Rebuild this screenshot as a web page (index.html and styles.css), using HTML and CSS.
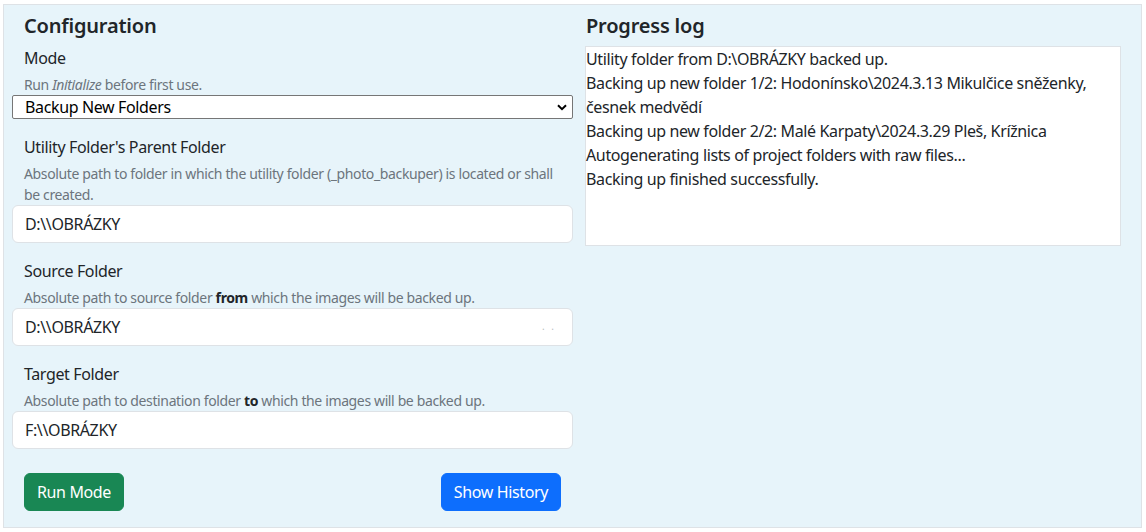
FILE: index.html
```html
<!DOCTYPE html>
<html lang="en">
<head>
<meta charset="utf-8">
<title>Photo Backuper</title>
<link rel="stylesheet" href="styles.css">
</head>
<body>
<div class="app">
  <section class="config">
    <h2 class="title">Configuration</h2>

    <div class="group">
      <label class="label">Mode</label>
      <div class="help">Run <em>Initialize</em> before first use.</div>
      <select class="select">
        <option>Backup New Folders</option>
      </select>
    </div>

    <div class="group">
      <label class="label">Utility Folder's Parent Folder</label>
      <div class="help">Absolute path to folder in which the utility folder (_photo_backuper) is located or shall be created.</div>
      <input class="input" type="text" value="D:\\OBRÁZKY">
    </div>

    <div class="group">
      <label class="label">Source Folder</label>
      <div class="help">Absolute path to source folder <b>from</b> which the images will be backed up.</div>
      <div class="input-wrap">
        <input class="input" type="text" value="D:\\OBRÁZKY">
        <span class="input-dots">. .</span>
      </div>
    </div>

    <div class="group">
      <label class="label">Target Folder</label>
      <div class="help">Absolute path to destination folder <b>to</b> which the images will be backed up.</div>
      <input class="input" type="text" value="F:\\OBRÁZKY">
    </div>

    <div class="actions">
      <button class="btn btn-green">Run Mode</button>
      <button class="btn btn-blue">Show History</button>
    </div>
  </section>

  <section class="progress">
    <h2 class="title">Progress log</h2>
    <div class="log">
      <div>Utility folder from D:\OBRÁZKY backed up.</div>
      <div>Backing up new folder 1/2: Hodonínsko\2024.3.13 Mikulčice sněženky, česnek medvědí</div>
      <div>Backing up new folder 2/2: Malé Karpaty\2024.3.29 Pleš, Krížnica</div>
      <div>Autogenerating lists of project folders with raw files...</div>
      <div>Backing up finished successfully.</div>
    </div>
  </section>
</div>
</body>
</html>
```

FILE: styles.css
```css
* { box-sizing: border-box; }

html, body {
  margin: 0;
  padding: 0;
  background: #ffffff;
}

body {
  font-family: "Segoe UI", "Noto Sans", "Liberation Sans", sans-serif;
  font-size: 16px;
  line-height: 1.5;
  letter-spacing: -0.023em;
  color: #212529;
}

.app {
  margin: 4px 4px 4px 3px;
  height: 524px;
  border: 1px solid #dee2e6;
  background: #e7f4fa;
  display: grid;
  grid-template-columns: 561px 536px;
  column-gap: 12px;
  padding: 9px 20px 0 8px;
  align-items: start;
}

.title {
  margin: 0 0 8px 0;
  font-size: 20px;
  font-weight: 600;
  line-height: 24px;
  letter-spacing: -0.01em;
}

.config .title { padding-left: 12px; }
.progress .title { padding-left: 1px; }

.group {
  display: flex;
  flex-direction: column;
  margin-bottom: 16px;
}

.group:first-of-type { margin-bottom: 17px; }

.label {
  padding-left: 12px;
  line-height: 24px;
  margin-bottom: 4px;
}

.help {
  padding: 0 12px;
  font-size: 14px;
  line-height: 21px;
  color: #6c757d;
}

.help b { color: #212529; font-weight: 700; }

.select {
  appearance: none;
  -webkit-appearance: none;
  height: 24px;
  margin: 0 0 -1px 0;
  padding: 0 24px 0 12px;
  font-family: inherit;
  font-size: 16px;
  letter-spacing: inherit;
  color: #000;
  background: #fff url("data:image/svg+xml,%3Csvg xmlns='http://www.w3.org/2000/svg' width='10' height='7' viewBox='0 0 10 7'%3E%3Cpath d='M1 1.2l4 4 4-4' fill='none' stroke='%23000' stroke-width='2'/%3E%3C/svg%3E") no-repeat right 5px center;
  border: 1px solid #767676;
  border-radius: 2px;
  line-height: 22px;
}

.input-wrap { position: relative; }

.input {
  display: block;
  width: 100%;
  height: 38px;
  padding: 0 12px;
  font-family: inherit;
  font-size: 16px;
  letter-spacing: inherit;
  color: #212529;
  background: #fff;
  border: 1px solid #dee2e6;
  border-radius: 6px;
  outline: none;
}

.input-dots {
  position: absolute;
  right: 17px;
  top: 13px;
  font-size: 10px;
  letter-spacing: 2px;
  color: #b8bcc0;
  line-height: 10px;
}

.actions {
  display: flex;
  justify-content: space-between;
  padding: 8px 12px 0 12px;
}

.btn {
  height: 38px;
  padding: 0 12px;
  font-family: inherit;
  font-size: 16px;
  letter-spacing: inherit;
  color: #fff;
  border: 1px solid transparent;
  border-radius: 6px;
}

.btn-green { background: #198754; border-color: #198754; }
.btn-blue { background: #0d6efd; border-color: #0d6efd; }

.log {
  height: 200px;
  margin-top: 2px;
  background: #fff;
  border: 1px solid #dee2e6;
  padding: 0;
  line-height: 24px;
  color: #212529;
}
```
